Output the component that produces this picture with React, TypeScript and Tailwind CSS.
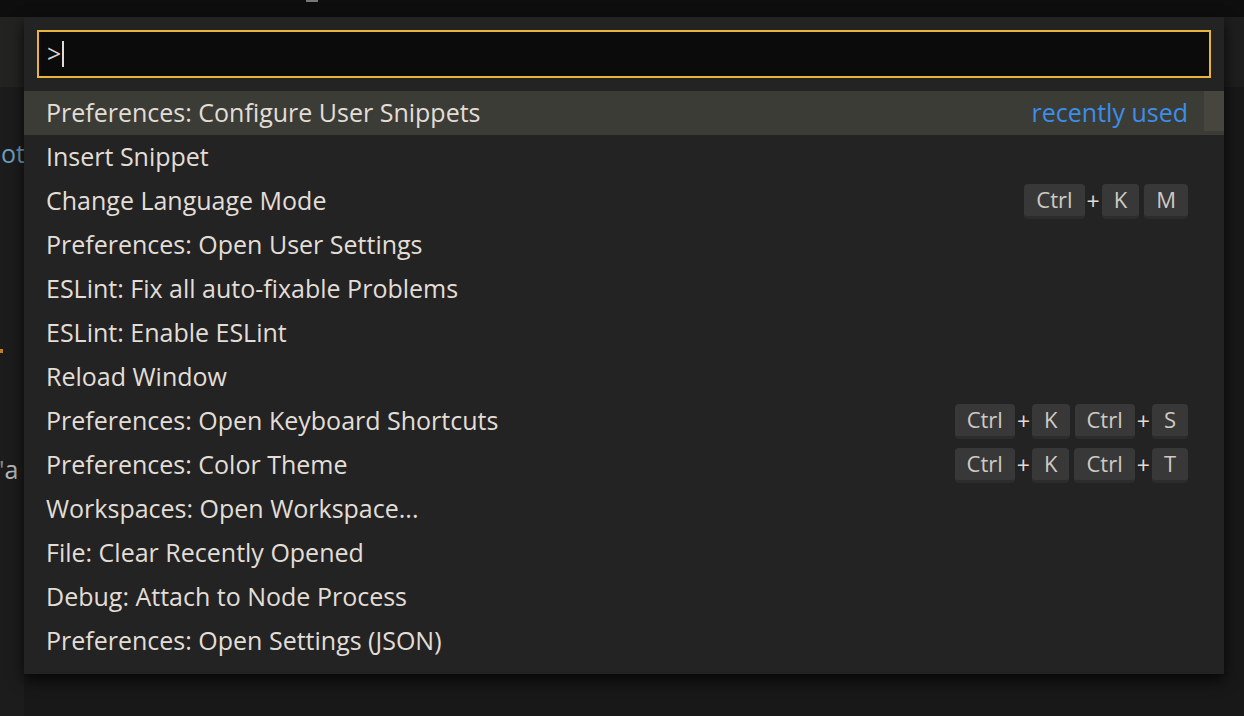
import React from "react";

type Item = { label: string; keys?: string[][]; recent?: boolean };

const items: Item[] = [
  { label: "Preferences: Configure User Snippets", recent: true },
  { label: "Insert Snippet" },
  { label: "Change Language Mode", keys: [["Ctrl", "K"], ["M"]] },
  { label: "Preferences: Open User Settings" },
  { label: "ESLint: Fix all auto-fixable Problems" },
  { label: "ESLint: Enable ESLint" },
  { label: "Reload Window" },
  { label: "Preferences: Open Keyboard Shortcuts", keys: [["Ctrl", "K"], ["Ctrl", "S"]] },
  { label: "Preferences: Color Theme", keys: [["Ctrl", "K"], ["Ctrl", "T"]] },
  { label: "Workspaces: Open Workspace..." },
  { label: "File: Clear Recently Opened" },
  { label: "Debug: Attach to Node Process" },
  { label: "Preferences: Open Settings (JSON)" },
];

function Key({ k }: { k: string }) {
  return (
    <span className="h-[35px] px-[12px] flex items-center justify-center rounded-[4px] bg-[#383838] border-b-[3px] border-[#2c2c2c] text-[22px] text-[#cfcac3]">
      {k}
    </span>
  );
}

function Chord({ chord }: { chord: string[][] }) {
  return (
    <div className="flex items-center gap-[5px]">
      {chord.map((group, gi) => (
        <div key={gi} className="flex items-center">
          {group.map((k, i) => (
            <React.Fragment key={i}>
              {i > 0 && <span className="px-[2px] text-[23px] text-[#e0dcd5]">+</span>}
              <Key k={k} />
            </React.Fragment>
          ))}
        </div>
      ))}
    </div>
  );
}

export default function App() {
  return (
    <div
      className="w-[1244px] h-[716px] bg-[#181818] flex flex-col overflow-hidden"
      style={{ fontFamily: '"Open Sans", "Noto Sans", sans-serif' }}
    >
      {/* title strip */}
      <div className="h-[17px] bg-[#0e0e0e] shrink-0 flex">
        <div className="ml-[306px] w-[12px] h-[2px] bg-[#777]" />
      </div>

      <div className="flex flex-1">
        {/* editor edge, left */}
        <div className="w-[24px] shrink-0 flex flex-col">
          <div className="h-[70px] bg-[#232322]" />
          <div className="flex-1 bg-[#1c1c1c] relative overflow-hidden text-[25px]">
            <span className="absolute left-[1px] top-[48px] text-[#6f9fbf]">ot</span>
            <span className="absolute left-0 top-[262px] w-[3px] h-[4px] bg-[#c08020]" />
            <span className="absolute left-[-1px] top-[364px] text-[#8a8a8a]">
              '<span className="text-[#b8b8b8]">a</span>
            </span>
          </div>
        </div>

        {/* command palette */}
        <div className="w-[1200px] h-[657px] shrink-0 bg-[#232323] shadow-[0_6px_14px_rgba(0,0,0,0.75)] z-10 flex flex-col">
          <div className="px-[13px] pt-[13px] pb-[13px]">
            <div className="h-[48px] bg-[#0b0b0b] border-2 border-[#e8b440] flex items-center pl-[8px]">
              <span className="text-[25px] text-[#d8d4cd]">&gt;</span>
              <span className="w-[2px] h-[26px] bg-[#e0dcd5] ml-[1px]" />
            </div>
          </div>
          <div className="flex flex-col">
            {items.map((it, i) => (
              <div
                key={i}
                className={`h-[44px] flex items-center pl-[22px] pr-[36px] relative ${
                  it.recent ? "bg-[#3c3c37]" : ""
                }`}
              >
                <span className="flex-1 text-[25px] text-[#e2ded7] whitespace-nowrap">{it.label}</span>
                {it.recent && <span className="text-[25px] text-[#3b8eea]">recently used</span>}
                {it.keys && <Chord chord={it.keys} />}
                {it.recent && (
                  <span className="absolute right-0 top-0 w-[20px] h-[40px] bg-[#46463f]" />
                )}
              </div>
            ))}
          </div>
        </div>

        {/* editor edge, right */}
        <div className="flex-1 flex flex-col">
          <div className="h-[70px] bg-[#1e1e1e]" />
          <div className="flex-1 bg-[#181818]" />
        </div>
      </div>
    </div>
  );
}
